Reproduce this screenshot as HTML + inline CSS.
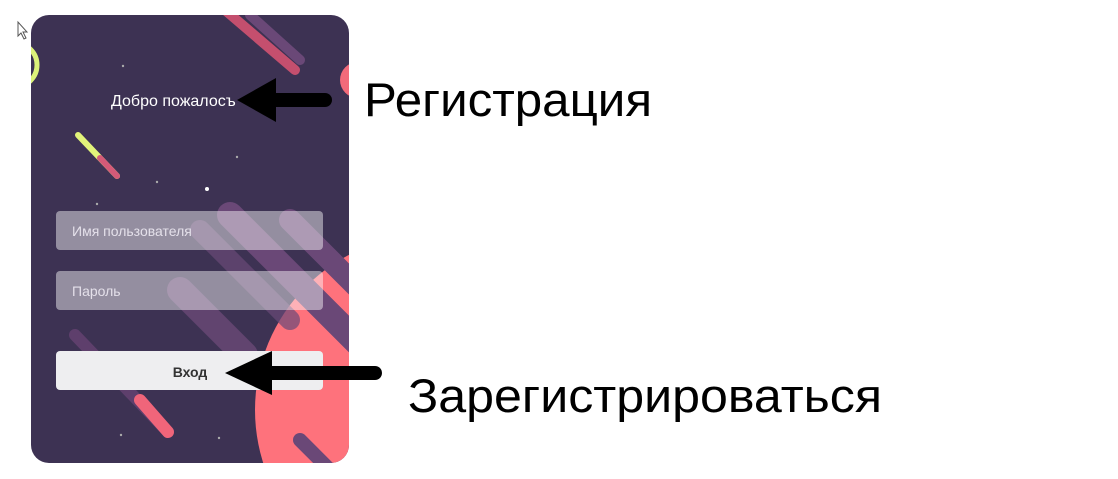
<!DOCTYPE html>
<html><head><meta charset="utf-8"><style>html,body{margin:0;padding:0;background:#fff;width:1118px;height:479px;overflow:hidden}svg{display:block}</style></head>
<body>
<svg width="1118" height="479" viewBox="0 0 1118 479" xmlns="http://www.w3.org/2000/svg" font-family="Liberation Sans, sans-serif">
<defs><clipPath id="c"><rect x="31" y="15" width="318" height="448" rx="18"/></clipPath></defs>
<g clip-path="url(#c)">
<rect x="31" y="15" width="318" height="448" fill="#3d3253"/>
<circle cx="430" cy="410" r="175" fill="#fe727c"/>
<g stroke-linecap="round" fill="none">
<line x1="230" y1="215" x2="400" y2="385" stroke="#6a4877" stroke-width="26"/>
<line x1="180" y1="290" x2="245" y2="355" stroke="#6a4877" stroke-width="26" opacity=".8"/>
<line x1="290" y1="220" x2="380" y2="310" stroke="#6a4877" stroke-width="22"/>
<line x1="200" y1="230" x2="290" y2="320" stroke="#6a4877" stroke-width="20" opacity=".7"/>
<line x1="330" y1="470" x2="300" y2="440" stroke="#6a4877" stroke-width="14"/>
<line x1="225" y1="10" x2="295" y2="70" stroke="#c44f6e" stroke-width="10"/>
<line x1="250" y1="15" x2="300" y2="60" stroke="#6a4877" stroke-width="10"/>
<line x1="78" y1="135" x2="117" y2="176" stroke="#e2f47a" stroke-width="6"/>
<line x1="100" y1="158" x2="117" y2="176" stroke="#d45a78" stroke-width="6"/>
<line x1="75" y1="335" x2="168" y2="432" stroke="#5e3f6c" stroke-width="12"/>
<line x1="140" y1="400" x2="168" y2="432" stroke="#f0657a" stroke-width="12"/>
</g>
<circle cx="358" cy="80" r="18" fill="#f26a7a"/>
<circle cx="15" cy="65" r="22" fill="none" stroke="#dcf27a" stroke-width="5"/>
<circle cx="207" cy="189" r="2" fill="#fff"/>
<circle cx="123" cy="66" r="1.2" fill="#aaa"/><circle cx="157" cy="182" r="1.2" fill="#aaa"/>
<circle cx="97" cy="204" r="1.2" fill="#aaa"/><circle cx="237" cy="157" r="1.2" fill="#aaa"/>
<circle cx="121" cy="435" r="1.2" fill="#aaa"/><circle cx="219" cy="438" r="1.2" fill="#aaa"/>
</g>
<rect x="56" y="211" width="267" height="39" rx="4" fill="#fff" fill-opacity=".45"/>
<rect x="56" y="271" width="267" height="39" rx="4" fill="#fff" fill-opacity=".45"/>
<rect x="56" y="351" width="267" height="39" rx="4" fill="#eeeef0"/>
<text x="72" y="236" font-size="14" fill="#e4e0ea">Имя пользователя</text>
<text x="72" y="296" font-size="14" fill="#e4e0ea">Пароль</text>
<text x="190" y="377" font-size="14" font-weight="bold" fill="#333" text-anchor="middle">Вход</text>
<text x="111" y="106" font-size="16" fill="#fff">Добро пожалосъ</text>
<line x1="265" y1="100" x2="325" y2="100" stroke="#000" stroke-width="14" stroke-linecap="round"/>
<polygon points="237,100 276,78 276,122" fill="#000"/>
<line x1="255" y1="373" x2="375" y2="373" stroke="#000" stroke-width="14" stroke-linecap="round"/>
<polygon points="225,373 272,351 272,395" fill="#000"/>
<text x="364" y="116" font-size="47" fill="#000" textLength="288" lengthAdjust="spacingAndGlyphs">Регистрация</text>
<text x="408" y="412" font-size="47" fill="#000" textLength="474" lengthAdjust="spacingAndGlyphs">Зарегистрироваться</text>
<path d="M18 22 L18 36 L21 33 L24 39 L26 38 L23 32 L27 32 Z" fill="#fff" stroke="#555" stroke-width="1"/>
</svg>
</body></html>
